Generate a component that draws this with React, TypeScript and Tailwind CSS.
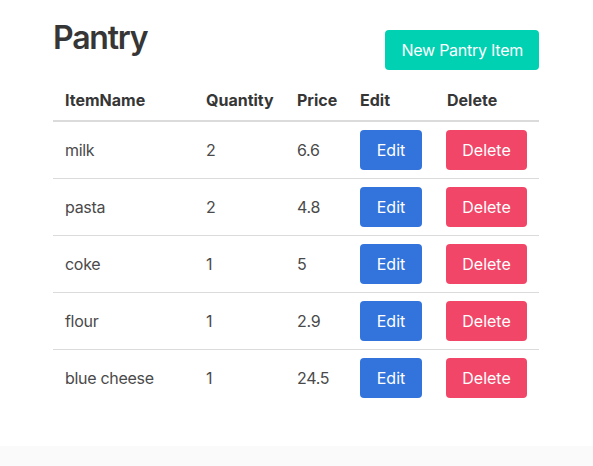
import React from "react";

const items = [
  { name: "milk", qty: 2, price: "6.6" },
  { name: "pasta", qty: 2, price: "4.8" },
  { name: "coke", qty: 1, price: "5" },
  { name: "flour", qty: 1, price: "2.9" },
  { name: "blue cheese", qty: 1, price: "24.5" },
];

export default function App() {
  return (
    <div
      className="bg-white text-[#4a4a4a] text-base leading-6"
      style={{ fontFamily: "Inter, 'Noto Sans', sans-serif" }}
    >
      <div className="mx-[53px] w-[486px] pt-5 pb-10">
        <div className="flex items-center justify-between">
          <h1 className="mb-6 text-[32px] leading-9 font-semibold tracking-[-1.2px] text-[#363636]">Pantry</h1>
          <button className="h-10 rounded-[4px] bg-[#00d1b2] px-[16px] text-base tracking-[-0.25px] text-white">
            New Pantry Item
          </button>
        </div>
        <table className="w-[486px] table-fixed border-collapse">
          <colgroup>
            <col className="w-[141px]" />
            <col className="w-[91px]" />
            <col className="w-[63px]" />
            <col className="w-[87px]" />
            <col className="w-[104px]" />
          </colgroup>
          <thead>
            <tr className="border-b-2 border-[#dbdbdb]">
              {["ItemName", "Quantity", "Price", "Edit", "Delete"].map((h) => (
                <th key={h} className="px-3 py-2 text-left font-bold text-[#363636]">
                  {h}
                </th>
              ))}
            </tr>
          </thead>
          <tbody>
            {items.map((it, i) => (
              <tr
                key={it.name}
                className={i < items.length - 1 ? "border-b border-[#dbdbdb]" : ""}
              >
                <td className="px-3 py-2 align-middle tracking-[-0.3px]">{it.name}</td>
                <td className="px-3 py-2 align-middle">{it.qty}</td>
                <td className="px-3 py-2 align-middle tracking-[-0.3px]">{it.price}</td>
                <td className="px-3 py-2 align-middle">
                  <button className="h-10 w-[62px] rounded-[4px] bg-[#3273dc] text-white">Edit</button>
                </td>
                <td className="px-3 py-2 align-middle">
                  <button className="ml-[-1px] h-10 w-[81px] rounded-[4px] bg-[#f14668] text-white">Delete</button>
                </td>
              </tr>
            ))}
          </tbody>
        </table>
      </div>
      <div className="h-5 bg-[#fafafa]" />
    </div>
  );
}
